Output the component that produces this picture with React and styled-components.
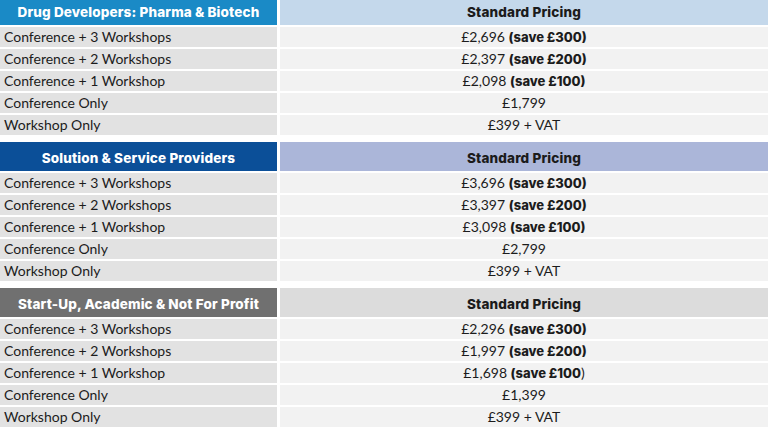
import styled, { createGlobalStyle } from 'styled-components';

const GlobalStyle = createGlobalStyle`
  html, body {
    margin: 0;
    padding: 0;
    background: #ffffff;
    overflow: hidden;
  }
  body {
    font-family: 'Lato', 'Liberation Sans', sans-serif;
    color: #1c1c1c;
  }
`

// save text: [bold part, trailing regular part]
const sections = [
  {
    title: 'Drug Developers: Pharma & Biotech',
    titleBg: '#1a8ac6',
    priceBg: '#c4d8eb',
    rows: [
      ['Conference + 3 Workshops', '£2,696', '(save £300)'],
      ['Conference + 2 Workshops', '£2,397', '(save £200)'],
      ['Conference + 1 Workshop', '£2,098', '(save £100)'],
      ['Conference Only', '£1,799'],
      ['Workshop Only', '£399 + VAT'],
    ],
  },
  {
    title: 'Solution & Service Providers',
    titleBg: '#0b4f98',
    priceBg: '#abb6d9',
    rows: [
      ['Conference + 3 Workshops', '£3,696', '(save £300)'],
      ['Conference + 2 Workshops', '£3,397', '(save £200)'],
      ['Conference + 1 Workshop', '£3,098', '(save £100)'],
      ['Conference Only', '£2,799'],
      ['Workshop Only', '£399 + VAT'],
    ],
  },
  {
    title: 'Start-Up, Academic & Not For Profit',
    titleBg: '#707070',
    priceBg: '#dcdcdc',
    rows: [
      ['Conference + 3 Workshops', '£2,296', '(save £300)'],
      ['Conference + 2 Workshops', '£1,997', '(save £200)'],
      ['Conference + 1 Workshop', '£1,698', '(save £100', ')'],
      ['Conference Only', '£1,399'],
      ['Workshop Only', '£399 + VAT'],
    ],
  },
]

const Page = styled.div`
  width: 768px;
  margin-top: -4px;
  display: flex;
  flex-direction: column;
  gap: 7px;
`

const Table = styled.div`
  display: grid;
  grid-template-columns: 277px 1fr;
  column-gap: 3px;
  row-gap: 2px;
`

const HeadCell = styled.div`
  height: 29px;
  padding-top: 2px;
  box-sizing: border-box;
  display: flex;
  align-items: center;
  justify-content: center;
  background: ${ p => p.$bg };
  color: ${ p => p.$light ? '#ffffff' : '#1b1b1b' };
  font-family: 'Inter', 'Liberation Sans', sans-serif;
  font-size: 13.5px;
  font-weight: 800;
  letter-spacing: 0.15px;
`

const LabelCell = styled.div`
  height: 20px;
  box-sizing: border-box;
  padding: 0 0 2px 4px;
  display: flex;
  align-items: center;
  background: #e2e2e2;
  font-size: 14px;
`

const PriceCell = styled.div`
  height: 20px;
  box-sizing: border-box;
  padding-bottom: 2px;
  display: flex;
  align-items: center;
  justify-content: center;
  background: #f2f2f2;
  font-size: 14px;
  white-space: pre;

  b {
    font-family: 'Inter', 'Liberation Sans', sans-serif;
    font-size: 13px;
    font-weight: 800;
  }
`

export default function App() {
  return (
    <>
      <GlobalStyle />
      <Page>
        { sections.map(section => (
          <Table key={ section.title }>
            <HeadCell $bg={ section.titleBg } $light>{ section.title }</HeadCell>
            <HeadCell $bg={ section.priceBg }>Standard Pricing</HeadCell>
            { section.rows.map(([label, price, save, tail]) => (
              <>
                <LabelCell key={ label }>{ label }</LabelCell>
                <PriceCell key={ label + price }>
                  <span>
                    { price }
                    { save && <> <b>{ save }</b>{ tail }</> }
                  </span>
                </PriceCell>
              </>
            ))}
          </Table>
        ))}
      </Page>
    </>
  )
}
